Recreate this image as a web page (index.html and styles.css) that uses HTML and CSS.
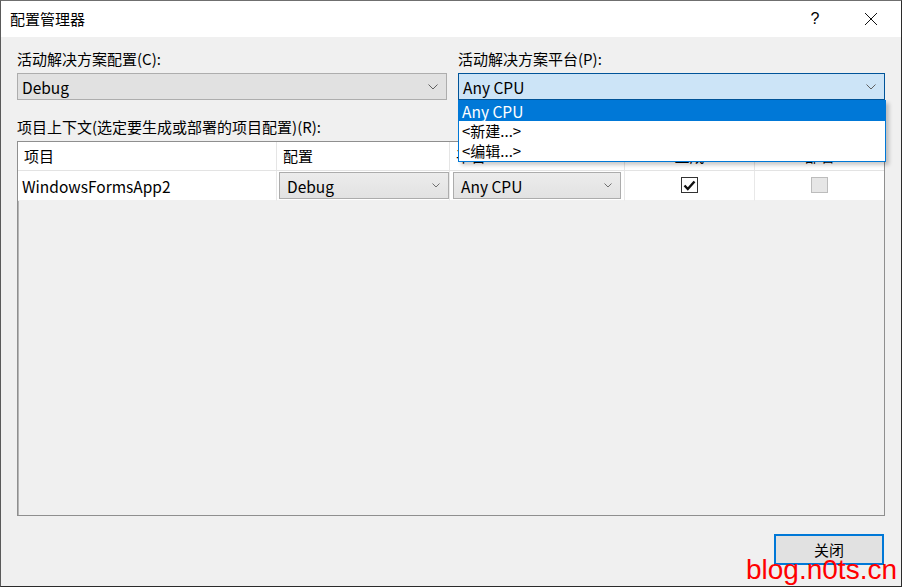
FILE: index.html
```html
<!DOCTYPE html>
<html lang="zh-CN">
<head>
<meta charset="utf-8">
<title>配置管理器</title>
<link rel="stylesheet" href="styles.css">
</head>
<body>
<div class="window">
  <div class="titlebar">
    <span class="title">配置管理器</span>
    <div class="tb-buttons">
      <span class="tb-help">?</span>
      <span class="tb-close"><svg width="14" height="14" viewBox="0 0 14 14"><path d="M1 1 L13 13 M13 1 L1 13" stroke="#111" stroke-width="1" fill="none"/></svg></span>
    </div>
  </div>
  <div class="content">
    <div class="top-row">
      <div class="field field-config">
        <div class="label">活动解决方案配置(C):</div>
        <div class="combo"><span class="combo-text">Debug</span><svg class="chev" width="10" height="6" viewBox="0 0 10 6"><path d="M0.5 0.5 L5 5 L9.5 0.5" stroke="#606060" stroke-width="1" fill="none"/></svg></div>
      </div>
      <div class="field field-platform">
        <div class="label">活动解决方案平台(P):</div>
        <div class="combo combo-active"><span class="combo-text">Any CPU</span><svg class="chev" width="10" height="6" viewBox="0 0 10 6"><path d="M0.5 0.5 L5 5 L9.5 0.5" stroke="#606060" stroke-width="1" fill="none"/></svg></div>
        <ul class="dropdown">
          <li class="selected">Any CPU</li>
          <li>&lt;新建...&gt;</li>
          <li>&lt;编辑...&gt;</li>
        </ul>
      </div>
    </div>
    <div class="label label-ctx">项目上下文(选定要生成或部署的项目配置)(R):</div>
    <div class="grid">
      <div class="row header">
        <div class="cell">项目</div>
        <div class="cell">配置</div>
        <div class="cell">平台</div>
        <div class="cell center">生成</div>
        <div class="cell center">部署</div>
      </div>
      <div class="row data">
        <div class="cell name">WindowsFormsApp2</div>
        <div class="cell cell-combo c-config"><div class="mini-combo"><span>Debug</span><svg class="chev-s" width="8" height="5" viewBox="0 0 8 5"><path d="M0.5 0.5 L4 4 L7.5 0.5" stroke="#707070" stroke-width="1" fill="none"/></svg></div></div>
        <div class="cell cell-combo c-platform"><div class="mini-combo"><span>Any CPU</span><svg class="chev-s" width="8" height="5" viewBox="0 0 8 5"><path d="M0.5 0.5 L4 4 L7.5 0.5" stroke="#707070" stroke-width="1" fill="none"/></svg></div></div>
        <div class="cell center"><span class="checkbox checked"><svg width="13" height="11" viewBox="0 0 13 11"><path d="M1.5 5.5 L4.8 9 L11.5 1.5" stroke="#111" stroke-width="2.4" fill="none"/></svg></span></div>
        <div class="cell center"><span class="checkbox disabled"></span></div>
      </div>
    </div>
    <div class="footer">
      <button class="btn-close">关闭</button>
    </div>
  </div>
  <div class="watermark">blog.n0ts.cn</div>
</div>
</body>
</html>
```
FILE: styles.css
```css
* { box-sizing: border-box; }
html, body { margin: 0; padding: 0; }
body {
  width: 902px;
  height: 587px;
  overflow: hidden;
  font-family: "Noto Sans CJK SC", "Noto Sans", sans-serif;
  font-size: 15px;
  color: #000;
  background: #f0f0f0;
}
.window {
  position: relative;
  width: 902px;
  height: 587px;
  background: #f0f0f0;
  border: 1px solid #2b2b2b;
  border-top-color: #6f6f6f;
  border-left-color: #5a5a5a;
  display: flex;
  flex-direction: column;
}
.titlebar {
  height: 36px;
  background: #fff;
  display: flex;
  align-items: center;
  padding-left: 9px;
  flex: none;
}
.title { font-size: 15px; line-height: 20px; }
.tb-buttons {
  margin-left: auto;
  display: flex;
  align-items: center;
  height: 100%;
}
.tb-help {
  width: 46px;
  text-align: center;
  font-family: "Liberation Sans", sans-serif;
  font-size: 16px;
  margin-right: 10px;
}
.tb-close {
  width: 46px;
  height: 100%;
  display: flex;
  align-items: center;
  justify-content: center;
  margin-right: 7px;
}
.content {
  padding: 12px 16px 0 16px;
  flex: 1;
  display: flex;
  flex-direction: column;
}
.top-row {
  display: flex;
  gap: 11px;
}
.field { position: relative; }
.field-config { width: 430px; }
.field-platform { width: 427px; }
.label {
  line-height: 20px;
  height: 20px;
  white-space: nowrap;
}
.combo {
  margin-top: 4px;
  height: 27px;
  border: 1px solid #adadad;
  background: #e1e1e1;
  display: flex;
  align-items: center;
  padding: 0 8px 0 4px;
}
.combo-text { line-height: 20px; font-size: 15.5px; }
.combo .chev { margin-left: auto; }
.combo-active {
  background: #cce4f7;
  border-color: #005499;
}
.dropdown {
  position: absolute;
  left: 0;
  top: 51px;
  width: 428px;
  height: 62px;
  margin: 0;
  padding: 0;
  list-style: none;
  background: #fff;
  border: 1px solid #0078d7;
  box-shadow: 3px 3px 4px rgba(0,0,0,0.22);
  z-index: 5;
}
.dropdown li {
  height: 20px;
  line-height: 20px;
  padding-left: 3px;
}
.dropdown li.selected {
  background: #0078d7;
  color: #fff;
  font-size: 15.5px;
}
.label-ctx { margin-top: 17px; }
.grid {
  margin-top: 4px;
  height: 375px;
  border: 1px solid #8f8f8f;
  box-shadow: inset 1px 1px 0 #b5b5b5;
  background: #f0f0f0;
}
.row {
  display: grid;
  grid-template-columns: 259px 173px 175px 130px 129px;
}
.row.header {
  height: 29px;
  border-bottom: 1px solid #e3e3e3;
}
.row.header .cell {
  background: #fff;
  border-right: 1px solid #e5e5e5;
  padding-left: 6px;
  line-height: 28px;
}
.row.data { height: 30px; }
.row.data .cell {
  background: #fff;
  border-right: 1px solid #e8e8e8;
  border-bottom: 1px solid #f0f0f0;
  display: flex;
  align-items: center;
}
.cell { white-space: nowrap; overflow: hidden; }
.row.header .cell.center { padding-left: 0; text-align: center; }
.row.data .cell.center { justify-content: center; }
.row.data .cell.name { padding-left: 4px; font-size: 15.5px; }
.row.data .cell:last-child, .row.header .cell:last-child { border-right: none; }
.cell-combo { padding: 1px 0 1px 2px; }
.c-platform { padding-left: 3px; padding-right: 3px; }
.mini-combo {
  width: 100%;
  height: 27px;
  border: 1px solid #acacac;
  background: linear-gradient(#ececec, #e2e2e2);
  display: flex;
  align-items: center;
  padding: 0 8px 0 7px;
  font-size: 15.5px;
}
.mini-combo .chev-s { margin-left: auto; }
.checkbox {
  width: 17px;
  height: 16px;
  border: 1px solid #333;
  background: #fff;
  display: inline-flex;
  align-items: center;
  justify-content: center;
  margin-top: -1px;
}
.checkbox.disabled {
  border-color: #bcbcbc;
  background: #e6e6e6;
}
.footer {
  display: flex;
  justify-content: flex-end;
  margin-top: 18px;
  padding-right: 1px;
}
.btn-close {
  width: 110px;
  height: 31px;
  border: 2px solid #0078d7;
  background: #e1e1e1;
  font-family: "Noto Sans CJK SC", sans-serif;
  font-size: 15px;
  color: #000;
  padding: 0;
}
.watermark {
  position: absolute;
  right: 4px;
  bottom: 0px;
  font-family: "Liberation Sans", Arial, sans-serif;
  font-size: 28px;
  line-height: 32px;
  color: #ff0000;
  z-index: 10;
}
```
